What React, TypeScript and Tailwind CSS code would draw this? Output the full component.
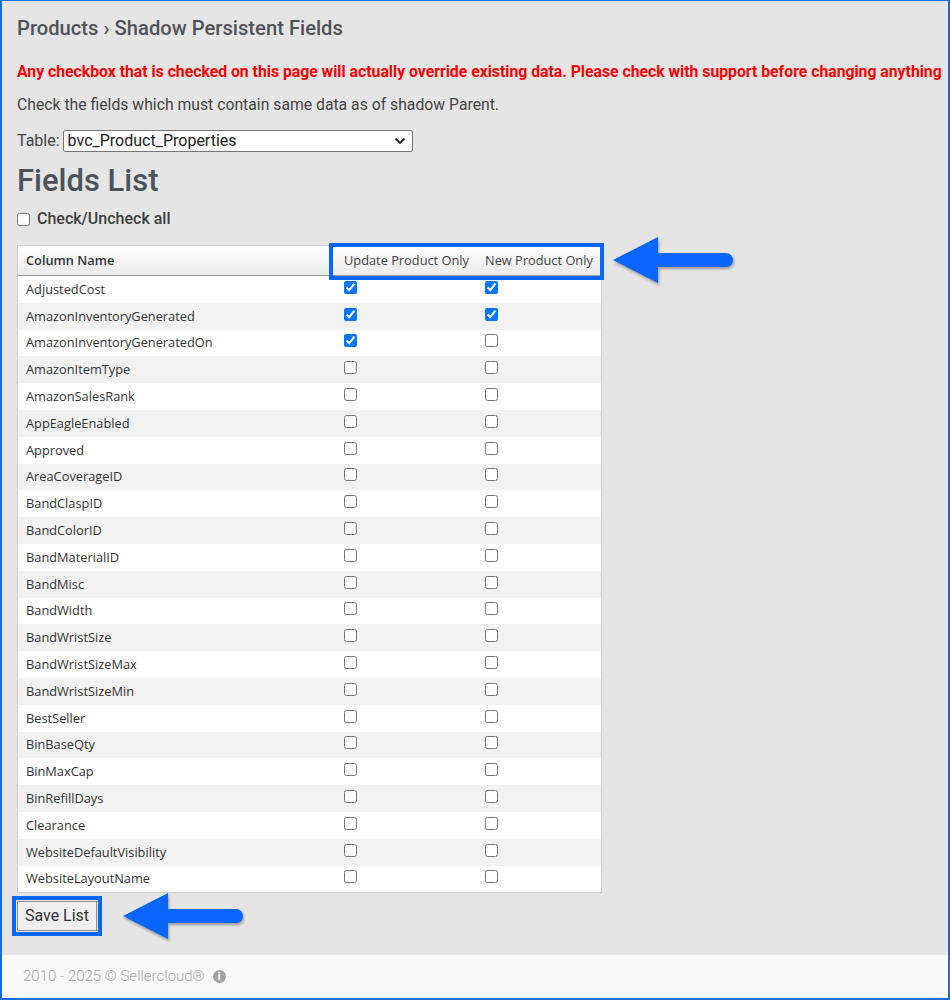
import { useState } from "react";

interface Field {
  name: string;
  update: boolean;
  fresh: boolean;
}

const initialFields: Field[] = [
  { name: "AdjustedCost", update: true, fresh: true },
  { name: "AmazonInventoryGenerated", update: true, fresh: true },
  { name: "AmazonInventoryGeneratedOn", update: true, fresh: false },
  { name: "AmazonItemType", update: false, fresh: false },
  { name: "AmazonSalesRank", update: false, fresh: false },
  { name: "AppEagleEnabled", update: false, fresh: false },
  { name: "Approved", update: false, fresh: false },
  { name: "AreaCoverageID", update: false, fresh: false },
  { name: "BandClaspID", update: false, fresh: false },
  { name: "BandColorID", update: false, fresh: false },
  { name: "BandMaterialID", update: false, fresh: false },
  { name: "BandMisc", update: false, fresh: false },
  { name: "BandWidth", update: false, fresh: false },
  { name: "BandWristSize", update: false, fresh: false },
  { name: "BandWristSizeMax", update: false, fresh: false },
  { name: "BandWristSizeMin", update: false, fresh: false },
  { name: "BestSeller", update: false, fresh: false },
  { name: "BinBaseQty", update: false, fresh: false },
  { name: "BinMaxCap", update: false, fresh: false },
  { name: "BinRefillDays", update: false, fresh: false },
  { name: "Clearance", update: false, fresh: false },
  { name: "WebsiteDefaultVisibility", update: false, fresh: false },
  { name: "WebsiteLayoutName", update: false, fresh: false },
];

// big blue callout arrow pointing left
const Arrow = ({ className }: { className: string }) => (
  <svg
    className={className}
    width="124"
    height="50"
    viewBox="0 0 124 50"
    style={{ filter: "drop-shadow(1px 2px 1.5px rgba(0,0,0,0.35))" }}
  >
    <rect x="40" y="17" width="81" height="14" rx="7" fill="#0866ff" />
    <polygon points="1,24 46,1 46,47" fill="#0866ff" />
  </svg>
);

const App = () => {
  const [fields, setFields] = useState<Field[]>(initialFields);

  const toggle = (i: number, key: "update" | "fresh") => {
    setFields((prev) =>
      prev.map((f, idx) => (idx === i ? { ...f, [key]: !f[key] } : f))
    );
  };

  const toggleAll = (checked: boolean) => {
    setFields((prev) =>
      prev.map((f) => ({ ...f, update: checked, fresh: checked }))
    );
  };

  return (
    <div className="relative w-[950px] h-[1000px] flex flex-col border-t border-l-2 border-r-2 border-b-2 border-[#1a6ae6] font-['Roboto',sans-serif]">
      <div className="flex-1 bg-[#e5e5e5] pl-[15px] pt-[15px]">
        {/* Breadcrumb */}
        <h1 className="text-[20.2px] leading-[24px] font-medium text-[#4f5359]">
          Products › Shadow Persistent Fields
        </h1>

        {/* Warning */}
        <p className="mt-[20px] text-[15.75px] leading-[24px] font-bold text-[#ff0000] whitespace-nowrap">
          Any checkbox that is checked on this page will actually override
          existing data. Please check with support before changing anything
        </p>

        <p className="mt-[9px] text-[15.75px] leading-[24px] text-[#444]">
          Check the fields which must contain same data as of shadow Parent.
        </p>

        {/* Table select */}
        <div className="mt-[12px] flex items-center gap-[3px] text-[16px] text-[#444]">
          <span>Table:</span>
          <div className="relative w-[350px] h-[22px] bg-white border border-[#767676] rounded-[2px] flex items-center pl-[4px] text-[#222]">
            <span>bvc_Product_Properties</span>
            <svg
              className="absolute right-[6px] top-[6px]"
              width="12"
              height="8"
              viewBox="0 0 12 8"
            >
              <path
                d="M1.5 1.5 L6 6 L10.5 1.5"
                fill="none"
                stroke="#222"
                strokeWidth="1.8"
              />
            </svg>
          </div>
        </div>

        <h2 className="mt-[9px] text-[31px] leading-[38px] font-medium text-[#4d535a]">
          Fields List
        </h2>

        <label className="mt-[9px] flex items-center h-[20px] text-[16px] font-medium text-[#3d3d3d]">
          <input
            type="checkbox"
            className="m-0 mr-[7px] w-[13px] h-[13px]"
            onChange={(e) => toggleAll(e.target.checked)}
          />
          Check/Uncheck all
        </label>

        {/* Fields table */}
        <div className="relative mt-[16px] w-[585px] border border-[#cfcfcf] bg-white font-['Open_Sans',sans-serif] text-[12.8px] text-[#333]">
          <div className="flex h-[30px] items-center bg-gradient-to-b from-white to-[#ebebeb] border-b border-[#9a9a9a]">
            <div className="w-[316px] pl-[8px] font-semibold text-[#333]">
              Column Name
            </div>
            <div className="w-[141px] pl-[10px] text-[#444]">
              Update Product Only
            </div>
            <div className="flex-1 pl-[10px] text-[#444]">New Product Only</div>
          </div>

          {fields.map((f, i) => (
            <div
              key={f.name}
              className={`flex h-[26.8px] items-center ${
                i % 2 === 1 ? "bg-[#f2f2f2]" : "bg-white"
              }`}
            >
              <div className="w-[316px] pl-[8px]">{f.name}</div>
              <div className="w-[141px] pl-[10px] flex items-center -mt-[4px]">
                <input
                  type="checkbox"
                  className="m-0 w-[13px] h-[13px]"
                  checked={f.update}
                  onChange={() => toggle(i, "update")}
                />
              </div>
              <div className="flex-1 pl-[10px] flex items-center -mt-[4px]">
                <input
                  type="checkbox"
                  className="m-0 w-[13px] h-[13px]"
                  checked={f.fresh}
                  onChange={() => toggle(i, "fresh")}
                />
              </div>
            </div>
          ))}

          {/* highlight around the two option columns */}
          <div className="absolute left-[311px] -top-[3px] w-[275px] h-[37px] border-4 border-[#0866ff]" />
        </div>

        {/* Save */}
        <div className="mt-[3px] -ml-[5px] inline-block border-4 border-[#0866ff] p-px">
          <button className="block w-[80px] h-[30px] bg-[#efefef] border border-[#8f8f8f] text-[16px] text-[#333]">
            Save List
          </button>
        </div>
      </div>

      {/* Footer */}
      <div className="h-[43px] bg-[#f9f9f9] flex items-center pl-[21px] text-[15px] font-light text-[#aaa]">
        <span>2010 - 2025 © Sellercloud®</span>
        <span className="ml-[8px] w-[13px] h-[13px] rounded-full bg-[#a3a3a3] flex items-center justify-center text-white text-[10px] font-bold leading-none">
          i
        </span>
      </div>

      {/* callout arrows */}
      <Arrow className="absolute left-[610px] top-[235px]" />
      <Arrow className="absolute left-[120px] top-[891px]" />
    </div>
  );
};

export default App;
